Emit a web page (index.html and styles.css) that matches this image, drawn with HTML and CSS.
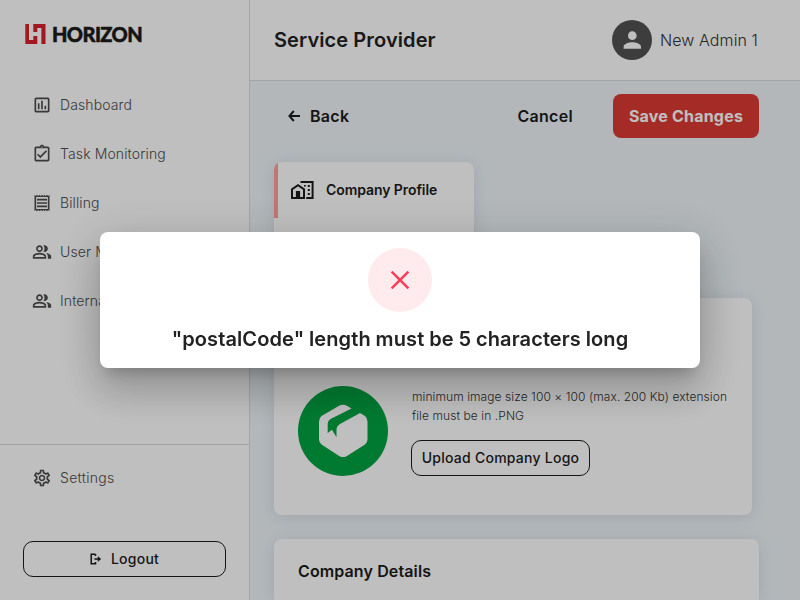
FILE: index.html
```html
<!DOCTYPE html>
<html lang="en">
<head>
<meta charset="utf-8">
<title>Service Provider</title>
<link rel="stylesheet" href="styles.css">
</head>
<body>
<div class="app">
  <aside class="sidebar">
    <div class="brand">
      <svg class="brand-mark" width="21" height="20" viewBox="0 0 21 20"><path fill="#dc1f2b" d="M.3 0H4V16H8.300V12H12.300V20H.3z"/><path fill="#dc1f2b" d="M8.300 0H20.500V20H16.400V4H12.300V8H8.300z"/></svg>
      <span class="brand-name">HORIZON</span>
    </div>
    <nav class="menu">
      <a class="item"><svg viewBox="0 0 24 24"><path d="M9 17H7v-7h2v7zm4 0h-2V7h2v10zm4 0h-2v-4h2v4zm2 2H5V5h14v14zm0-16H5c-1.100 0-2 .9-2 2v14c0 1.100.9 2 2 2h14c1.100 0 2-.9 2-2V5c0-1.100-.9-2-2-2z"/></svg><span>Dashboard</span></a>
      <a class="item"><svg viewBox="0 0 24 24"><path d="M19 3h-4.180C14.400 1.840 13.300 1 12 1s-2.400.84-2.820 2H5c-1.100 0-2 .9-2 2v14c0 1.100.9 2 2 2h14c1.100 0 2-.9 2-2V5c0-1.100-.9-2-2-2zm-7-.25c.41 0 .75.340.75.750s-.34.750-.75.750-.75-.34-.75-.75.340-.75.750-.75zM19 19H5V5h14v14zM17.990 9l-1.410-1.420-6.590 6.590-2.580-2.570-1.420 1.410 4 3.990z"/></svg><span>Task Monitoring</span></a>
      <a class="item"><svg viewBox="0 0 24 24"><path d="M19.500 3.500L18 2l-1.500 1.500L15 2l-1.500 1.500L12 2l-1.500 1.500L9 2 7.500 3.500 6 2 4.500 3.500 3 2v20l1.500-1.500L6 22l1.500-1.500L9 22l1.500-1.500L12 22l1.500-1.500L15 22l1.500-1.500L18 22l1.500-1.500L21 22V2l-1.500 1.500zM19 19.090H5V4.910h14v14.180zM6 15h12v2H6zm0-4h12v2H6zm0-4h12v2H6z"/></svg><span>Billing</span></a>
      <a class="item"><svg viewBox="0 0 24 24"><use href="#people"/></svg><span>User Management</span></a>
      <a class="item"><svg viewBox="0 0 24 24"><use href="#people"/></svg><span>Internal User</span></a>
    </nav>
    <div class="side-foot">
      <a class="item"><svg viewBox="0 0 24 24"><path d="M19.430 12.980c.04-.32.070-.64.070-.98s-.03-.66-.07-.98l2.110-1.650c.19-.15.240-.42.120-.64l-2-3.460c-.12-.22-.39-.3-.61-.22l-2.490 1c-.52-.4-1.080-.73-1.690-.98l-.38-2.650C14.460 2.180 14.250 2 14 2h-4c-.25 0-.46.180-.49.420l-.38 2.650c-.61.250-1.170.590-1.690.980l-2.490-1c-.23-.09-.49 0-.61.220l-2 3.460c-.13.220-.07.490.120.640l2.110 1.650c-.04.320-.07.650-.07.980s.03.660.070.980l-2.110 1.650c-.19.150-.24.420-.12.640l2 3.460c.12.220.39.300.61.220l2.490-1c.52.400 1.080.730 1.690.980l.38 2.650c.03.240.24.420.49.420h4c.25 0 .46-.18.490-.42l.38-2.650c.61-.25 1.170-.59 1.690-.98l2.490 1c.23.090.49 0 .61-.22l2-3.460c.12-.22.070-.49-.12-.64l-2.110-1.650zm-1.980-1.710c.04.310.05.520.05.730s-.02.430-.05.730l-.14 1.130.89.700 1.080.84-.7 1.210-1.270-.51-1.040-.42-.9.680c-.43.320-.84.560-1.250.730l-1.060.43-.16 1.130-.2 1.350h-1.400l-.19-1.350-.16-1.130-1.060-.43c-.43-.18-.83-.41-1.230-.71l-.91-.7-1.060.43-1.270.51-.7-1.210 1.080-.84.890-.7-.14-1.130c-.03-.31-.05-.54-.05-.74s.02-.43.050-.73l.14-1.130-.89-.7-1.080-.84.7-1.210 1.270.51 1.040.42.900-.68c.43-.32.840-.56 1.250-.73l1.060-.43.160-1.130.2-1.350h1.390l.19 1.350.16 1.130 1.060.43c.43.180.83.410 1.230.71l.91.700 1.060-.43 1.270-.51.700 1.210-1.070.85-.89.700.14 1.130zM12 8c-2.210 0-4 1.790-4 4s1.790 4 4 4 4-1.790 4-4-1.790-4-4-4zm0 6c-1.100 0-2-.9-2-2s.9-2 2-2 2 .9 2 2-.9 2-2 2z"/></svg><span>Settings</span></a>
      <button class="outline logout"><svg width="14" height="14" viewBox="0 0 14 14" fill="none" stroke="#1b1b1b" stroke-width="1.500"><path d="M6.500 2.200H2.200v9.600H6.500V10M6.500 2.200V4M5.500 7H11"/><path d="M8.800 4.300L12.200 7 8.800 9.700z" fill="#1b1b1b" stroke="none"/></svg>Logout</button>
    </div>
  </aside>
  <main class="main">
    <header class="header">
      <h1>Service Provider</h1>
      <div class="user"><span class="avatar"><svg width="26" height="26" viewBox="0 0 24 24"><path fill="#fff" d="M12.300 12c2.210 0 4-1.790 4-4s-1.790-4-4-4-4 1.790-4 4 1.790 4 4 4zm0 2c-2.670 0-8 1.340-8 4v2h16v-2c0-2.660-5.330-4-8-4z"/></svg></span>New Admin 1</div>
    </header>
    <section class="content">
      <div class="actions">
        <a class="back"><svg width="12" height="12" viewBox="0 0 12 12" fill="none" stroke="#1b1b1b" stroke-width="1.900"><path d="M5.800 1L1.400 6l4.400 5M1.400 6H12"/></svg>Back</a>
        <a class="cancel">Cancel</a>
        <button class="save">Save Changes</button>
      </div>
      <div class="card tabs">
        <div class="tab"><svg width="24" height="24" viewBox="0 0 24 24"><path fill="none" stroke="#1b1b1b" stroke-width="2" d="M2 20V11.300L8 7.100l6 4.200V20zM10.500 4H22.600V20H16.200"/><path d="M5.900 13h4.200v8H5.900zM17.800 7h2v2h-2zM17.800 11h2v2h-2zM17.800 15h2v2h-2zM14 7h1.800v1.600H14z"/></svg><span>Company Profile</span></div>
      </div>
      <div class="card upload">
        <svg class="company-logo" width="90" height="90" viewBox="0 0 90 90"><circle cx="45" cy="45" r="45" fill="#00a341"/><path fill="#fff" d="M41.500 19.500Q45 18 48.500 19.500L53.500 22.500 33 32.700Q29.700 34.500 29.700 38V47L34 43.700 38.500 51.300V44Q38.500 40 42 38L62 27 67 30Q69.500 32 69.500 35.500V53.500Q69.500 56.500 67 58.500L48.500 70.200Q45 72 41.500 70.200L23.500 58.500Q21 56.500 21 53.500V35.500Q21 32 23.500 30Z"/></svg>
        <div class="upload-info">
          <p>minimum image size 100 × 100 (max. 200 Kb) extension file must be in .PNG</p>
          <button class="outline"><span>Upload Company Logo</span></button>
        </div>
      </div>
      <div class="card details"><h2>Company Details</h2></div>
    </section>
  </main>
</div>
<div class="overlay">
  <div class="dialog">
    <span class="error-icon"><svg width="20" height="20" viewBox="0 0 20 20" fill="none" stroke="#f83e5b" stroke-width="2.500"><path d="M1.600 1.600L18.400 18.400M18.400 1.600L1.600 18.400"/></svg></span>
    <p>"postalCode" length must be 5 characters long</p>
  </div>
</div>
<svg class="defs"><defs><path id="people" d="M16.670 13.130C18.040 14.060 19 15.320 19 17v3h4v-3c0-2.180-3.570-3.470-6.330-3.870zM15 12c2.210 0 4-1.790 4-4s-1.790-4-4-4c-.47 0-.91.100-1.330.240C14.500 5.270 15 6.580 15 8s-.5 2.730-1.330 3.760c.42.140.86.240 1.330.240zM9 12c2.210 0 4-1.790 4-4s-1.790-4-4-4-4 1.790-4 4 1.790 4 4 4zm0-6c1.100 0 2 .9 2 2s-.9 2-2 2-2-.9-2-2 .9-2 2-2zm0 7c-2.670 0-8 1.340-8 4v3h16v-3c0-2.660-5.330-4-8-4zm6 5H3v-.99C3.200 16.290 6.300 15 9 15s5.800 1.290 6 2v1z"/></defs></svg>
</body>
</html>
```
FILE: styles.css
```css
* { box-sizing: border-box; }
body { margin: 0; width: 800px; height: 600px; overflow: hidden; font-family: Inter, sans-serif; color: #222; }
h1, h2, p { margin: 0; }
button { font-family: inherit; }
.defs { position: absolute; width: 0; height: 0; }
.app { display: flex; height: 600px; }

.sidebar { width: 250px; flex: none; display: flex; flex-direction: column; background: #fff; border-right: 1px solid #dcdcdc; }
.brand { display: flex; align-items: center; gap: 6px; height: 20px; margin: 24px 0 0 25px; }
.brand-name { font: 900 20px/20px Lato, sans-serif; color: #1b1b1b; letter-spacing: -.6px; -webkit-text-stroke: .5px #1b1b1b; }
.menu { display: flex; flex-direction: column; gap: 25px; margin-top: 49px; }
.item { display: flex; align-items: center; gap: 8px; height: 24px; padding-left: 32px; font-size: 14px; font-weight: 300; letter-spacing: .12px; color: #4d4d4d; white-space: nowrap; }
.item span { padding-bottom: 1px; }
.item svg { width: 20px; height: 20px; flex: none; fill: #4d4d4d; }
.side-foot { margin-top: auto; height: 156px; border-top: 1px solid #dcdcdc; padding-top: 21px; }
.side-foot .item { letter-spacing: .3px; }
.outline { display: flex; align-items: center; justify-content: center; height: 36px; border: 1px solid #1b1b1b; border-radius: 10px; background: transparent; padding: 0 0 2px; color: #1b1b1b; font-size: 14px; font-weight: 500; letter-spacing: .25px; }
.logout { width: 203px; margin: 51px 0 0 23px; gap: 8px; padding: 0 1px 1px 0; }

.main { flex: 1; display: flex; flex-direction: column; min-width: 0; background: #eff5f9; }
.header { height: 81px; flex: none; display: flex; align-items: center; justify-content: space-between; padding: 0 41px 0 24px; background: #fff; border-bottom: 1px solid #dcdcdc; }
.header h1 { font-size: 20px; font-weight: 600; line-height: 24px; letter-spacing: .1px; }
.user { display: flex; align-items: center; gap: 8px; width: 147px; font-size: 16px; font-weight: 300; color: #333; letter-spacing: .1px; white-space: nowrap; }
.avatar { display: flex; align-items: center; justify-content: center; width: 40px; height: 40px; flex: none; border-radius: 50%; background: #525252; }

.content { flex: 1; min-height: 0; overflow: hidden; padding: 13px 41px 0 24px; }
.actions { display: flex; align-items: center; height: 44px; font-size: 16px; font-weight: 600; letter-spacing: .3px; color: #1b1b1b; }
.back { display: flex; align-items: center; gap: 10px; padding-left: 14px; margin-right: auto; }
.cancel { margin-right: 40px; }
.save { width: 146px; height: 44px; border: 0; border-radius: 8px; background: #dd3a33; color: #fff; font-size: 16px; font-weight: 700; letter-spacing: .2px; padding: 0; }
.card { background: #fff; border-radius: 8px; box-shadow: 0 2px 16px rgba(70, 90, 105, .15); }
.tabs { width: 200px; height: 112px; margin-top: 24px; overflow: hidden; }
.tab { display: flex; align-items: center; gap: 12px; height: 56px; padding-left: 12px; border-left: 4px solid #ff9e9c; font-size: 14px; font-weight: 600; letter-spacing: -.08px; color: #1b1b1b; }
.tab span { padding-bottom: 1px; }
.tab svg { fill: #1b1b1b; }
.upload { display: flex; width: 478px; height: 217px; margin-top: 24px; padding: 88px 20px 0 24px; }
.company-logo { flex: none; }
.upload-info { padding: 1px 0 0 24px; }
.upload-info p { font-size: 12px; line-height: 19px; font-weight: 300; letter-spacing: .08px; color: #333; }
.upload-info .outline { width: 179px; margin: 15px 0 0 -1px; }
.details { height: 61px; margin-top: 24px; padding: 22px 24px 0; border-radius: 8px 8px 0 0; }
.details h2 { font-size: 16px; line-height: 20px; font-weight: 600; letter-spacing: .12px; color: #1b1b1b; }

.overlay { position: fixed; inset: 0; display: flex; align-items: center; justify-content: center; background: rgba(0, 0, 0, .25); }
.dialog { width: 600px; height: 136px; padding-top: 16px; display: flex; flex-direction: column; align-items: center; gap: 15px; background: #fff; border-radius: 8px; box-shadow: 0 11px 15px -7px rgba(0, 0, 0, .2), 0 24px 38px 3px rgba(0, 0, 0, .14), 0 9px 46px 8px rgba(0, 0, 0, .12); }
.error-icon { display: flex; align-items: center; justify-content: center; width: 64px; height: 64px; border-radius: 50%; background: #ffebee; }
.dialog p { font-size: 20px; line-height: 24px; font-weight: 600; letter-spacing: .1px; word-spacing: -.3px; }
```
